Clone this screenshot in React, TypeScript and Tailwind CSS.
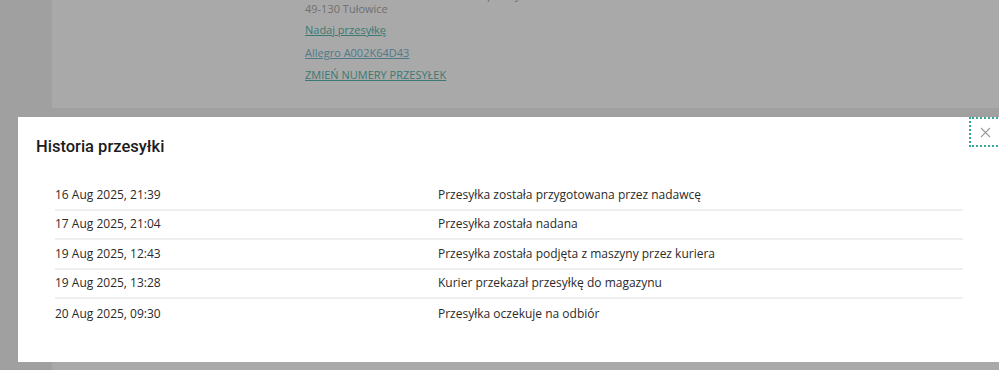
import React from "react";

const rows = [
  ["16 Aug 2025, 21:39", "Przesyłka została przygotowana przez nadawcę"],
  ["17 Aug 2025, 21:04", "Przesyłka została nadana"],
  ["19 Aug 2025, 12:43", "Przesyłka została podjęta z maszyny przez kuriera"],
  ["19 Aug 2025, 13:28", "Kurier przekazał przesyłkę do magazynu"],
  ["20 Aug 2025, 09:30", "Przesyłka oczekuje na odbiór"],
];

export default function App() {
  return (
    <div className="relative w-[999px] h-[370px] overflow-hidden bg-[#a0a0a0] font-['Open_Sans',sans-serif]">
      {/* background page (dimmed) */}
      <div className="flex flex-col">
        <div className="ml-[52px] h-[108px] bg-[#a9a9a9] flex overflow-hidden">
          <div className="ml-[253px] w-[182px] flex flex-col -mt-[12px] text-[11px]">
            <div className="leading-[14px] text-[#6f6f6f]">Porcelanowa 13</div>
            <div className="leading-[14px] text-[#6f6f6f]">49-130 Tułowice</div>
            <a className="mt-[6px] leading-[16px] text-[#3a7a72] underline">Nadaj przesyłkę</a>
            <a className="mt-[7px] leading-[16px] text-[#4f7a88] underline">Allegro A002K64D43</a>
            <a className="mt-[6px] leading-[16px] text-[#3a7a72] underline">ZMIEŃ NUMERY PRZESYŁEK</a>
          </div>
          <div className="-mt-[12px] text-[11px] leading-[14px] text-[#6f6f6f]">przesyłki</div>
        </div>
        <div className="ml-[52px] mt-[254px] h-[20px] bg-[#a9a9a9]" />
      </div>

      {/* modal */}
      <div className="absolute left-[18px] top-[117px] w-[990px] h-[245px] bg-white">
        <button className="absolute left-[951px] top-0 w-[32px] h-[30px] border-2 border-dotted border-[#3aa897] flex items-center justify-center">
          <svg width="11" height="11" viewBox="0 0 11 11">
            <path d="M1 1L10 10M10 1L1 10" stroke="#9a9a9a" strokeWidth="1.1" fill="none" />
          </svg>
        </button>
        <h2 className="ml-[18px] mt-[20px] text-[16.5px] leading-[20px] font-medium text-[#1c1c1c] font-['Roboto',sans-serif]">
          Historia przesyłki
        </h2>
        <div className="ml-[37px] mt-[24px] w-[908px] flex flex-col">
          {rows.map(([d, t], i) => (
            <div
              key={i}
              className={`grid grid-cols-[383px_1fr] items-center h-[29.5px] text-[12px] text-[#2a2a2a] ${
                i < rows.length - 1 ? "border-b-2 border-[#efefef]" : ""
              }`}
            >
              <div>{d}</div>
              <div>{t}</div>
            </div>
          ))}
        </div>
      </div>
    </div>
  );
}
